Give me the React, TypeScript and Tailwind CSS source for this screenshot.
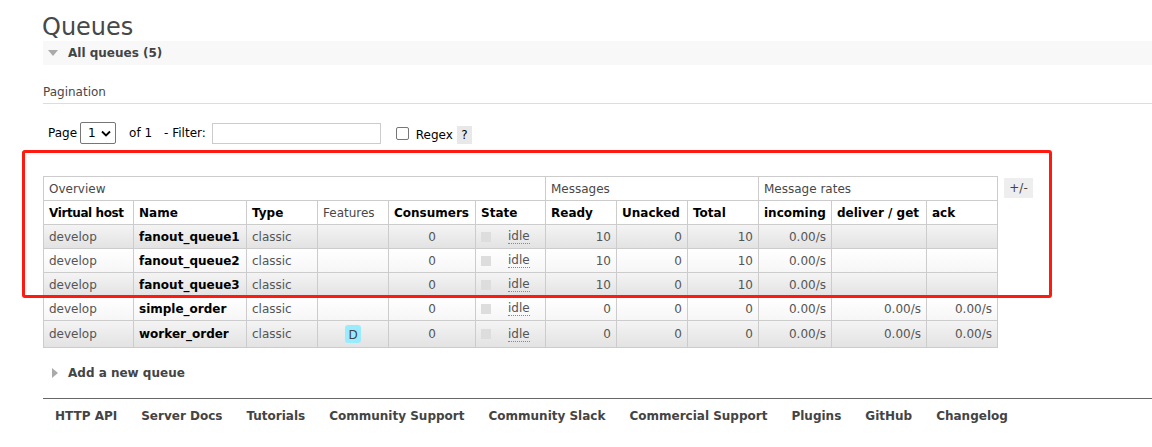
import React from 'react'

type Queue = {
  vhost: string
  name: string
  durable?: boolean
  ready: number
  unacked: number
  total: number
  incoming: string
  deliver: string
  ack: string
}

const QUEUES: Queue[] = [
  { vhost: 'develop', name: 'fanout_queue1', ready: 10, unacked: 0, total: 10, incoming: '0.00/s', deliver: '', ack: '' },
  { vhost: 'develop', name: 'fanout_queue2', ready: 10, unacked: 0, total: 10, incoming: '0.00/s', deliver: '', ack: '' },
  { vhost: 'develop', name: 'fanout_queue3', ready: 10, unacked: 0, total: 10, incoming: '0.00/s', deliver: '', ack: '' },
  { vhost: 'develop', name: 'simple_order', ready: 0, unacked: 0, total: 0, incoming: '0.00/s', deliver: '0.00/s', ack: '0.00/s' },
  { vhost: 'develop', name: 'worker_order', durable: true, ready: 0, unacked: 0, total: 0, incoming: '0.00/s', deliver: '0.00/s', ack: '0.00/s' },
]

const FOOTER = [
  'HTTP API',
  'Server Docs',
  'Tutorials',
  'Community Support',
  'Community Slack',
  'Commercial Support',
  'Plugins',
  'GitHub',
  'Changelog',
]

const COLS = [90, 113, 71, 71, 87, 70, 71, 71, 71, 73, 95, 71]

const th = 'border border-[#ccc] px-[5px] text-left font-bold text-black whitespace-nowrap overflow-visible'
const thNormal = 'border border-[#ccc] px-[5px] text-left font-normal text-[#484848] whitespace-nowrap'
const td = 'border border-[#ccc] px-[5px] text-[#555] whitespace-nowrap'

export default function App() {
  return (
    <div
      className="relative h-[447px] w-[1152px] overflow-hidden bg-white text-[12px] text-[#484848]"
      style={{ fontFamily: '"DejaVu Sans", Verdana, sans-serif' }}
    >
      <h1 className="pl-[42px] pt-[13px] text-[24px] leading-[28px] font-normal text-[#484848]">Queues</h1>

      {/* ===== All queues ===== */}
      <div className="ml-[43px] flex h-[24px] items-center bg-[#f8f8f8]">
        <span className="ml-[5px] h-0 w-0 border-x-[5px] border-t-[6px] border-x-transparent border-t-[#aaa]" />
        <span className="ml-[10px] text-[12px] font-bold text-[#444]">All queues (5)</span>
      </div>

      <div className="ml-[43px] mt-[20px] border-b border-[#ddd] pb-[3px] leading-[15px]">Pagination</div>

      {/* ===== ページング ===== */}
      <div className="ml-[48px] mt-[18px] flex items-center text-black">
        <span>Page</span>
        <div className="ml-[3px] flex h-[22px] w-[36px] items-center justify-between rounded-[2px] border border-[#767676] pl-[7px] pr-[4px]">
          <span>1</span>
          <svg width="10" height="7" viewBox="0 0 10 7">
            <path d="M1 1.5 L5 5.5 L9 1.5" fill="none" stroke="#000" strokeWidth="1.8" />
          </svg>
        </div>
        <span className="ml-[13px]">of 1</span>
        <span className="ml-[12px]">- Filter:</span>
        <div className="ml-[6px] h-[21px] w-[169px] border border-[#ccc]" />
        <div className="ml-[15px] h-[13px] w-[13px] rounded-[2px] border border-[#767676]" />
        <span className="ml-[7px] mt-[3px]">Regex</span>
        <span className="ml-[4px] mt-[4px] flex h-[18px] w-[15px] items-center justify-center bg-[#e8e8e8]">?</span>
      </div>

      {/* ===== テーブル ===== */}
      <div className="mt-[32px] ml-[43px] flex items-start">
        <table className="table-fixed border-collapse text-[12px]">
          <colgroup>
            {COLS.map((w, i) => (
              <col key={i} style={{ width: w }} />
            ))}
          </colgroup>
          <thead>
            <tr className="h-[24px]">
              <th colSpan={6} className={thNormal}>Overview</th>
              <th colSpan={3} className={thNormal}>Messages</th>
              <th colSpan={3} className={thNormal}>Message rates</th>
            </tr>
            <tr className="h-[24px]">
              <th className={`${th} tracking-[-0.4px]`}>Virtual host</th>
              <th className={th}>Name</th>
              <th className={th}>Type</th>
              <th className={thNormal}>Features</th>
              <th className={th}>Consumers</th>
              <th className={th}>State</th>
              <th className={th}>Ready</th>
              <th className={th}>Unacked</th>
              <th className={th}>Total</th>
              <th className={th}>incoming</th>
              <th className={th}>deliver / get</th>
              <th className={th}>ack</th>
            </tr>
          </thead>
          <tbody>
            {QUEUES.map((q, i) => (
              <tr
                key={q.name}
                className={`${q.durable ? 'h-[27px]' : 'h-[24px]'} ${
                  i % 2 === 0
                    ? 'bg-gradient-to-b from-[#f4f4f4] to-[#e2e2e2]'
                    : 'bg-gradient-to-b from-white to-[#f6f6f6]'
                }`}
              >
                <td className={td}>{q.vhost}</td>
                <td className={`${td} font-bold text-black`}>{q.name}</td>
                <td className={td}>classic</td>
                <td className={`${td} text-center`}>
                  {q.durable && (
                    <span className="inline-block h-[18px] w-[16px] rounded-[3px] bg-[#99ebff] text-center leading-[20px] text-[#444]">D</span>
                  )}
                </td>
                <td className={`${td} text-center`}>0</td>
                <td className={td}>
                  <div className="flex items-center">
                    <span className="h-[10px] w-[10px] bg-[#ddd]" />
                    <span className="ml-[17px] border-b border-dotted border-[#888] leading-[14px]">idle</span>
                  </div>
                </td>
                <td className={`${td} text-right`}>{q.ready}</td>
                <td className={`${td} text-right`}>{q.unacked}</td>
                <td className={`${td} text-right`}>{q.total}</td>
                <td className={`${td} text-right`}>{q.incoming}</td>
                <td className={`${td} text-right`}>{q.deliver}</td>
                <td className={`${td} text-right`}>{q.ack}</td>
              </tr>
            ))}
          </tbody>
        </table>
        <span className="ml-[6px] mt-[2px] flex h-[20px] w-[29px] items-center justify-center bg-[#eee] text-[#444]">+/-</span>
      </div>

      {/* ===== Add a new queue ===== */}
      <div className="ml-[52px] mt-[16px] flex items-center">
        <span className="h-0 w-0 border-y-[5px] border-l-[6px] border-y-transparent border-l-[#aaa]" />
        <span className="ml-[10px] text-[12px] font-bold text-[#444]">Add a new queue</span>
      </div>

      {/* ===== フッター ===== */}
      <div className="ml-[43px] mt-[16px] border-t border-[#666] pl-[12px] pt-[8px]">
        <div className="flex gap-[24px] text-[12px] font-bold text-[#444]">
          {FOOTER.map((f) => (
            <span key={f}>{f}</span>
          ))}
        </div>
      </div>

      {/* 赤枠の注釈 */}
      <div className="pointer-events-none absolute left-[22px] top-[150px] h-[148px] w-[1030px] rounded-[3px] border-[3px] border-[#ff1a10]" />
    </div>
  )
}
